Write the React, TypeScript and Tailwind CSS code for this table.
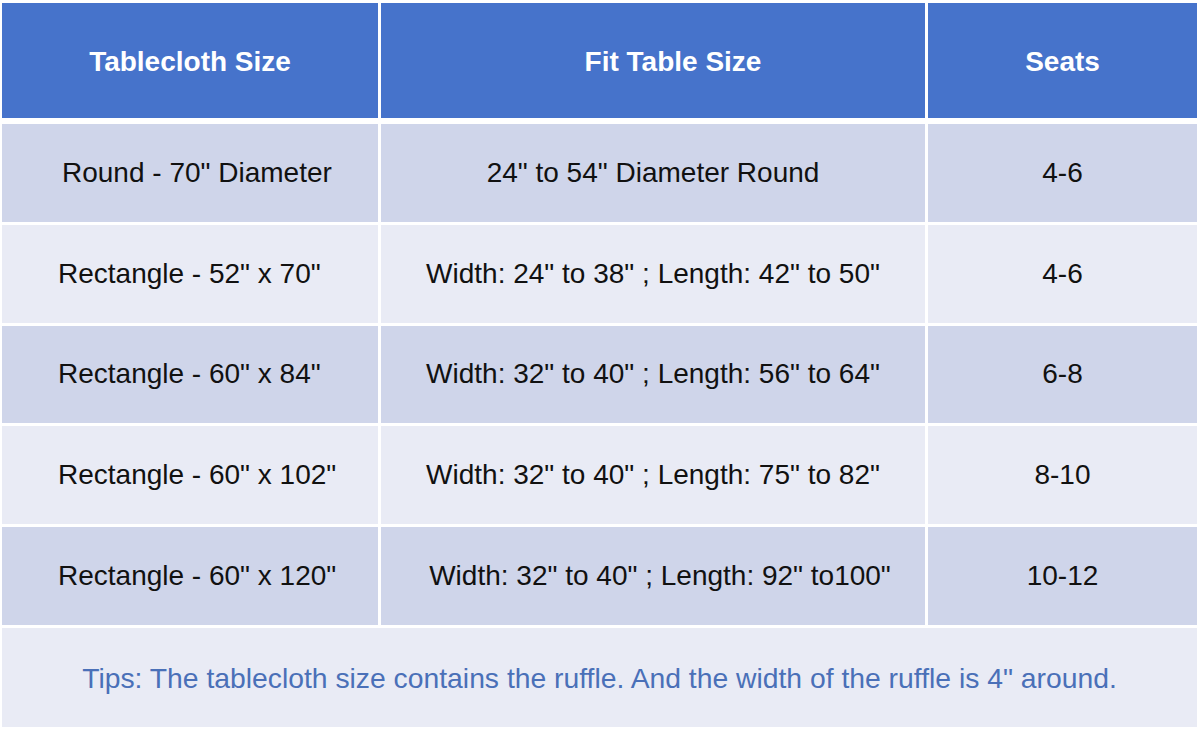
const rows = [
  { size: "Round - 70\" Diameter", fit: "24\" to 54\" Diameter Round", seats: "4-6", pad: "pl-[60px]", fitPad: "" },
  { size: "Rectangle - 52\" x 70\"", fit: "Width: 24\" to 38\" ; Length: 42\" to 50\"", seats: "4-6", pad: "pl-[56px]", fitPad: "" },
  { size: "Rectangle - 60\" x 84\"", fit: "Width: 32\" to 40\" ; Length: 56\" to 64\"", seats: "6-8", pad: "pl-[56px]", fitPad: "" },
  { size: "Rectangle - 60\" x 102\"", fit: "Width: 32\" to 40\" ; Length: 75\" to 82\"", seats: "8-10", pad: "pl-[56px]", fitPad: "" },
  { size: "Rectangle - 60\" x 120\"", fit: "Width: 32\" to 40\" ; Length: 92\" to100\"", seats: "10-12", pad: "pl-[56px]", fitPad: "pl-[14px]" },
]

export default function App() {
  return (
    <div className="h-[730px] w-[1200px] bg-white pl-[2px] pt-[3px] font-['Liberation_Sans',Arial,sans-serif]">
      <div className="grid w-[1195px] grid-cols-[376px_544px_269px] gap-x-[3px] text-[28px] font-bold text-white">
        <div className="flex h-[115px] items-center justify-center bg-[#4673cb] pt-[3px]">Tablecloth Size</div>
        <div className="flex h-[115px] items-center justify-center bg-[#4673cb] pl-[40px] pt-[3px]">Fit Table Size</div>
        <div className="flex h-[115px] items-center justify-center bg-[#4673cb] pt-[3px]">Seats</div>
      </div>
      <div className="mt-[6px] flex w-[1195px] flex-col gap-[3px]">
        {rows.map((r, i) => {
          const bg = i % 2 === 0 ? "bg-[#cfd5ea]" : "bg-[#e9ebf5]"
          return (
            <div key={i} className="grid grid-cols-[376px_544px_269px] gap-x-[3px] text-[28px] text-[#111]">
              <div className={`flex h-[97.8px] items-center ${r.pad} ${bg}`}>{r.size}</div>
              <div className={`flex h-[97.8px] items-center justify-center ${r.fitPad} ${bg}`}>{r.fit}</div>
              <div className={`flex h-[97.8px] items-center justify-center ${bg}`}>{r.seats}</div>
            </div>
          )
        })}
        <div className="flex h-[99px] items-center justify-center bg-[#e9ebf5] pt-[2px] text-[28.3px] text-[#4a70b8]">
          Tips: The tablecloth size contains the ruffle. And the width of the ruffle is 4" around.
        </div>
      </div>
    </div>
  )
}
